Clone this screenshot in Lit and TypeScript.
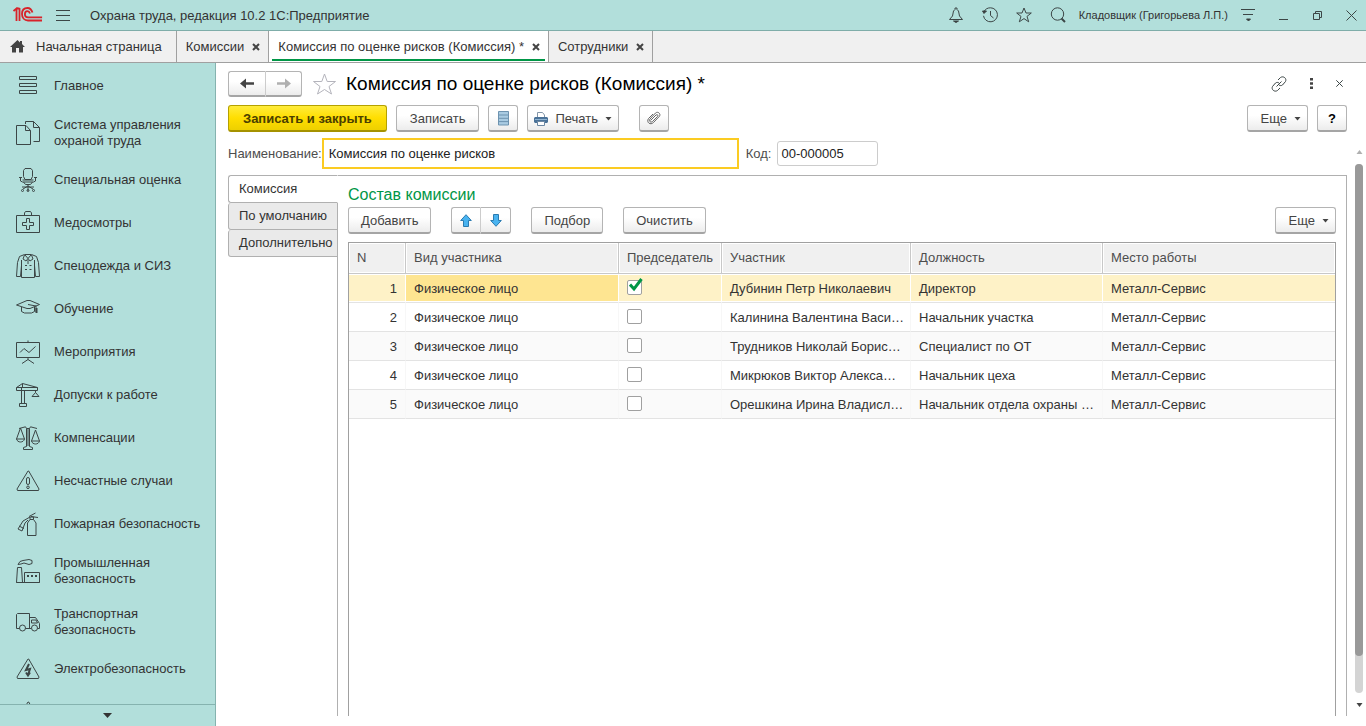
import { LitElement, html, svg, css } from "lit";
import { customElement, property, state } from "lit/decorators.js";
import { classMap } from "lit/directives/class-map.js";

const sectionIcons: Record<string, unknown> = {
  menu: svg`<path d="M3.500 2.500h17v3h-17zM3.500 9.500h17v3h-17zM3.500 16.500h17v3h-17z"/>`,
  docs: svg`<path d="M.5 4.500h9.500l4.500 5v14H.5zM9.500 4.500v5h5M9.500 3V.5h8l6 6v14h-6M17.500.5v6h6"/>`,
  chair: svg`<path d="M9 .5h6l1.500 2v6l-1.500 3H9l-1.500-3v-6zM3 9.500h3M18 9.500h3M4.500 9.500v3.500l2 1h11l2-1V9.500M6.500 12h11M7.500 14l2 2.500h5l2-2.500M12 16v7M12 18l-5 3M12 18l5 3M6 19h12"/><circle cx="6.500" cy="22.500" r="1"/><circle cx="12" cy="22.500" r="1"/><circle cx="17.500" cy="22.500" r="1"/>`,
  medkit: svg`<path d="M.5 4.500h23v17H.5zM8.500 4.500V2l1-1.500h5l1 1.500v2.500M10.500 7.500h3v4h4v3h-4v4h-3v-4h-4v-3h4z"/>`,
  coat: svg`<path d="M8.500.5h7l5 2 2 6 1 14h-4l-1-11M8.500.5l-5 2-2 6-1 14h4l1-11M5.500 11v12.500h13V11M8.500 1L7 5l3 2 2-2.500L14 7l3-2-1.500-4M9 1l3 3.500L15 1M12 6v4M5.500 6v6M18.500 6v6"/><path d="M9 11.500h2M13.500 11.500h2M9 15.500h2M13.500 15.500h2"/>`,
  cap: svg`<path d="M.5 8L11 3.500h3L23.500 7.500 14 11.500h-3zM5.500 10v4.500l3 1.500h7l3-1.500V10M12 7.500l8 1.500v6"/><path class="bold" d="M20.500 11v5"/>`,
  board: svg`<path d="M.5 2.500h23v15H.5zM12 .5v2M12 17.500v2M12 19.500l-6 4M12 19.500l6 4M4 12.500l4-4 5 4 6.500-6"/>`,
  crane: svg`<path d="M.5 4.500h21v3H.5zM.5 4.500L6.500.5l15 4M6.500.5v4M5.500 7.500v13M8.500 7.500v13M3.500 20.500h7v3h-7zM19.500 7.500v2M16 13.500l3.500-4 3.500 4zM5.500 4v3"/>`,
  scales: svg`<path d="M3 2.500L9.500.8l1 1.700h3l1-1.700L21 2.500M4.500 2l-4 11h8zM19.500 4l-4 11h8zM.5 13c1 4 7 4 8 0M15.500 15c1 4 7 4 8 0M10.500 2.500v18M13.500 2.500v18M10.500 20.500l-3 1v2h9v-2l-3-1M12 3v17"/>`,
  warning: svg`<path d="M12 2L1 20l.5 1.500h21L23 20 12.700 2z"/><rect x="10.500" y="8.500" width="3" height="7" rx="1.500"/><circle cx="12" cy="18.300" r="1.300"/>`,
  fire: svg`<path d="M11.500 23.500V11l2.500-3.500h3.500L20 11v12.500zM14 7.500V5h3.500v2.500M13 4.500L19.500 1M15 4.500l7 1M14 5L7 9l-5 8 4 2 3-8 3-3M3 14l5 2.500"/>`,
  factory: svg`<path d="M.5 23.500l1-15h4l1 15zM8.500 13.500h15v10h-15zM.5 23.500h23M2 5.500l2-3 3-1 6-1 3 1v3l-3 1-5-1.500-3 1z"/><path class="bold" d="M11 17h2M15 17h2M19 17h2"/>`,
  truck: svg`<path d="M3.500 18.500H.5v-14l1-1h12v15h-4M13.500 7.500h6l4 6v5h-2M15 18.500h-5M15.500 10h4.500l1.500 3h-6z"/><circle cx="6.500" cy="18" r="3"/><circle cx="18.500" cy="18" r="3"/>`,
  electric: svg`<path d="M12 2L1 20l.5 1.500h21L23 20 12.700 2z"/><path class="bold" d="M13 7l-3 6 4-1-2 6M10 15.500l2 3 2-3"/>`,
};

interface Section { icon: string; lines: string[]; }

const sections: Section[] = [
  { icon: "menu", lines: ["Главное"] },
  { icon: "docs", lines: ["Система управления", "охраной труда"] },
  { icon: "chair", lines: ["Специальная оценка"] },
  { icon: "medkit", lines: ["Медосмотры"] },
  { icon: "coat", lines: ["Спецодежда и СИЗ"] },
  { icon: "cap", lines: ["Обучение"] },
  { icon: "board", lines: ["Мероприятия"] },
  { icon: "crane", lines: ["Допуски к работе"] },
  { icon: "scales", lines: ["Компенсации"] },
  { icon: "warning", lines: ["Несчастные случаи"] },
  { icon: "fire", lines: ["Пожарная безопасность"] },
  { icon: "factory", lines: ["Промышленная", "безопасность"] },
  { icon: "truck", lines: ["Транспортная", "безопасность"] },
  { icon: "electric", lines: ["Электробезопасность"] },
  { icon: "warning", lines: [] },
];

const shared = css`
  * { box-sizing: border-box; }
  button, input { font: inherit; color: inherit; margin: 0; }
  button { padding: 0; border: 0; background: none; }
  svg { display: block; flex: none; fill: none; stroke: #3c4646; stroke-width: 1; }
`;

@customElement("app-header")
class AppHeader extends LitElement {
  static styles = [shared, css`
    :host { display: flex; align-items: center; height: 31px; padding: 0 9px 0 13px; background: #b2dfdb; border-bottom: 1px solid #7fada9; color: #333; }
    .menu { margin-left: 13px; }
    .title { margin: 0 auto 0 19px; padding-top: 2px; font-size: 13px; font-weight: normal; }
    .tools { display: flex; align-items: center; gap: 18px; }
    .user { font-size: 11px; margin: 0 13px; }
    .window { display: flex; align-items: center; gap: 23px; margin-left: 22px; }
    .solid { fill: #333; }
    .logo { stroke: #d8232a; stroke-width: 1.800; }
  `];
  render() {
    return html`
      <svg class="logo" width="30" height="16" viewBox="0 0 30 16"><path d="M.5 4L3.500 1.500V14M6.500 1v13M3.500 1.500h3M19.500 5.500C18.500 2.500 17 1 14.500 1 11 1 9 3.500 9 7c0 4 2.500 6.500 6 6.500h14M17 6.500C16.500 5 15.800 4.200 14.500 4.200c-1.800 0-2.600 1.300-2.600 3 0 2 1.300 3.200 3.200 3.200h14"/></svg>
      <button class="menu" aria-label="Меню"><svg width="15" height="13" viewBox="0 0 15 13"><path d="M0 1.500h14M0 6.500h14M0 11.500h14"/></svg></button>
      <h1 class="title">Охрана труда, редакция 10.2 1С:Предприятие</h1>
      <div class="tools">
        <button aria-label="Уведомления"><svg width="16" height="16" viewBox="0 0 16 16"><path d="M1.500 12.500h13l-3-3.500-1-5L9 2.500V1H7v1.500L5.500 4l-1 5z"/><path class="solid" d="M5.500 14h5L8 15.500z"/></svg></button>
        <button aria-label="История"><svg width="16" height="16" viewBox="0 0 16 16"><path d="M2 4.500C3.500 2 5.500.8 8.500.8a7 7 0 1 1-7 8M8.500 4v4.500l3 2.500"/><path class="solid" d="M.5 4h4L2 6.500z"/></svg></button>
        <button aria-label="Избранное"><svg width="16" height="16" viewBox="0 0 16 16"><path d="M8 1l2 5h5.300L11 9.400l1.700 5.400L8 11.600l-4.700 3.200L5 9.400.7 6H6z"/></svg></button>
        <button aria-label="Поиск"><svg width="16" height="16" viewBox="0 0 16 16"><circle cx="7.500" cy="7" r="6.200"/><path stroke-width="2" d="M11.500 11.500l3.500 3.500"/></svg></button>
      </div>
      <span class="user">Кладовщик (Григорьева Л.П.)</span>
      <button aria-label="Настройки"><svg width="15" height="14" viewBox="0 0 15 14"><path d="M0 1.500h14M2 6.500h10"/><path class="solid" d="M5.500 11h4l-2 2z"/></svg></button>
      <div class="window">
        <button aria-label="Свернуть"><svg width="11" height="11" viewBox="0 0 11 11"><path d="M1 9.500h9"/></svg></button>
        <button aria-label="Развернуть"><svg width="11" height="11" viewBox="0 0 11 11"><path d="M1.500 3.500h6v6h-6zM3.500 3.500v-2h6v6h-2"/></svg></button>
        <button aria-label="Закрыть"><svg width="11" height="11" viewBox="0 0 11 11"><path d="M.5.5l10 10M10.500.5l-10 10"/></svg></button>
      </div>`;
  }
}

@customElement("app-tabs")
class AppTabs extends LitElement {
  static styles = [shared, css`
    :host { display: flex; height: 32px; background: #f0f0f0; border-bottom: 1px solid #a0a0a0; font-size: 13px; color: #333; }
    .tab { display: flex; align-items: center; gap: 8px; padding: 0 8px 0 9px; border-right: 1px solid #a0a0a0; }
    .home { gap: 11px; padding: 0 14px 0 10px; }
    .active { background: linear-gradient(#009646, #009646) 50% calc(100% - 1px) / calc(100% - 6px) 2px no-repeat #fff; }
    .solid { fill: #444; stroke: none; }
    .cross { stroke: #444; stroke-width: 2; }
  `];
  render() {
    const tabs = ["Комиссии", "Комиссия по оценке рисков (Комиссия) *", "Сотрудники"];
    return html`
      <button class="tab home"><svg width="15" height="13" viewBox="0 0 15 13"><path class="solid" d="M7.500 0L0 7h2v5.500h4V8h3v4.500h4V7h2l-3-3V1h-2v1.500z"/></svg>Начальная страница</button>
      ${tabs.map((name, i) => html`<div class=${classMap({ tab: true, active: i === 1 })}><button>${name}</button>
        <button aria-label="Закрыть"><svg class="cross" width="8" height="8" viewBox="0 0 8 8"><path d="M1 1l6 6M7 1L1 7"/></svg></button></div>`)}`;
  }
}

@customElement("app-sections")
class AppSections extends LitElement {
  static styles = [shared, css`
    :host { display: flex; flex-direction: column; flex: none; width: 216px; background: #b2dfdb; border-right: 1px solid #85b3af; color: #333; font-size: 13px; line-height: 16px; }
    .list { flex: 1; min-height: 0; overflow: hidden; margin: 0; padding: 1px 0 0; list-style: none; }
    .link { display: flex; align-items: center; gap: 14px; min-height: 43px; padding: 10px 8px 9px 16px; color: inherit; text-decoration: none; }
    .line { display: block; }
    .bold { stroke-width: 2; }
    .more { display: flex; align-items: center; justify-content: center; height: 22px; border-top: 1px solid #85b3af; }
    .solid { fill: #333; stroke: none; }
  `];
  render() {
    return html`
      <ul class="list">${sections.map((s) => html`<li><a class="link" href="#">
        <svg width="24" height="24" viewBox="0 0 24 24">${sectionIcons[s.icon]}</svg>
        <span>${s.lines.map((l) => html`<span class="line">${l}</span>`)}</span></a></li>`)}</ul>
      <button class="more" aria-label="Еще разделы"><svg width="9" height="5" viewBox="0 0 9 5"><path class="solid" d="M0 0h9L4.500 5z"/></svg></button>`;
  }
}

interface Member { name: string; post: string; chair: boolean; }

@customElement("members-table")
class MembersTable extends LitElement {
  static styles = [shared, css`
    :host { display: block; flex: 1; min-height: 0; overflow: hidden; border: 1px solid #a0a0a0; border-bottom: 0; }
    .grid { width: 100%; table-layout: fixed; border-collapse: separate; border-spacing: 0; }
    .n { width: 57px; } .kind { width: 213px; } .lead { width: 103px; } .who { width: 189px; } .post { width: 192px; }
    th, td { padding: 0 4px 0 8px; text-align: left; font-weight: normal; white-space: nowrap; overflow: hidden; }
    th { height: 31px; background: #f0f0f0; color: #4d4d4d; border-right: 1px solid #c8c8c8; border-bottom: 1px solid #c8c8c8; box-shadow: inset 0 0 0 1px #fff; }
    td { height: 29px; padding-top: 1px; color: #333; border-right: 1px solid #f7f7f7; border-bottom: 1px solid #e3e3e3; }
    th:last-child, td:last-child { border-right: 0; }
    td.num { text-align: right; padding-right: 8px; }
    tr:nth-child(odd) td { background: #fafafa; }
    tr.current td { background: #fef2c7; border-right-color: #fff; box-shadow: inset 0 1px #fff, inset 0 -1px #fff; }
    tr.current td.cell { background: #fee591; }
    .check { position: relative; display: block; width: 15px; height: 15px; }
    .box { appearance: none; display: block; width: 15px; height: 15px; background: #fff; border: 1px solid #a0a0a0; border-radius: 2px; }
    .mark { position: absolute; left: 2px; top: -2px; stroke: #009646; stroke-width: 3; pointer-events: none; }
    td.flag { overflow: visible; padding-top: 0; padding-bottom: 2px; }
  `];
  @property({ attribute: false }) members: Member[] = [];
  render() {
    return html`<table class="grid">
      <colgroup><col class="n"><col class="kind"><col class="lead"><col class="who"><col class="post"><col></colgroup>
      <thead><tr><th>N</th><th>Вид участника</th><th>Председатель</th><th>Участник</th><th>Должность</th><th>Место работы</th></tr></thead>
      <tbody>${this.members.map((m, i) => html`<tr class=${classMap({ current: i === 0 })}>
        <td class="num">${i + 1}</td><td class="cell">Физическое лицо</td>
        <td class="flag"><label class="check"><input class="box" type="checkbox" aria-label="Председатель" .checked=${m.chair}>
          ${m.chair ? html`<svg class="mark" width="14" height="14" viewBox="0 0 14 14"><path d="M1 6.500l4 4.500L12.500 1"/></svg>` : ""}</label></td>
        <td>${m.name}</td><td>${m.post}</td><td>Металл-Сервис</td></tr>`)}</tbody>
    </table>`;
  }
}

@customElement("app-root")
class AppRoot extends LitElement {
  static styles = [shared, css`
    :host { display: flex; flex-direction: column; height: 100vh; overflow: hidden; background: #fff; color: #333; font: 13px/16px "Liberation Sans", Arial, sans-serif; }
    .work { display: flex; flex: 1; min-height: 0; }
    .main { display: flex; flex-direction: column; flex: 1; min-width: 0; padding: 8px 0 10px 12px; }
    .head { display: flex; align-items: center; height: 25px; margin: 0 21px 9px 0; }
    .btn { display: flex; align-items: center; justify-content: center; height: 27px; padding: 2px 13px 0; color: #444; background: linear-gradient(#fff 40%, #ececec); border: 1px solid #b4b4b4; border-bottom: 2px solid #a5a5a5; border-radius: 3px; white-space: nowrap; }
    .pair { display: flex; }
    .pair .btn { padding: 0; width: 30px; }
    .pair .btn:first-child { border-radius: 3px 0 0 3px; border-right-color: #ccc; }
    .pair .btn:last-child { border-left: 0; border-radius: 0 3px 3px 0; }
    .nav .btn { height: 26px; width: 36px; }
    .nav .btn:first-child { width: 38px; }
    .btn.primary { padding: 2px 14px 0; color: #4a4000; font-weight: bold; background: linear-gradient(#ffec3c, #ffde00 50%, #edd000); border-color: #b5a100; border-bottom-color: #a59200; }
    .btn.icon { width: 30px; padding: 0; }
    .btn.drop { gap: 7px; padding: 2px 6px 0 13px; }
    .btn.print { gap: 7px; padding: 2px 6px 0; }
    .btn.help { color: #000; font-weight: bold; width: 30px; padding: 2px 0 0; }
    .star { margin: 0 9px 0 10px; }
    .title { flex: 1; margin: 0; font-size: 19px; line-height: 24px; font-weight: normal; color: #000; }
    .marks { display: flex; align-items: center; gap: 23px; margin-right: 2px; }
    .bar { display: flex; align-items: center; gap: 9px; margin-right: 19px; }
    .apart { margin-left: 11px; }
    .push { margin-left: auto; }
    .area { display: flex; flex: 1; min-height: 0; margin-top: 6px; }
    .form { display: flex; flex-direction: column; flex: 1; min-width: 0; }
    .fields { display: flex; align-items: center; color: #4d4d4d; margin-bottom: 6px; }
    .name { flex: 0 1 417px; min-width: 0; height: 31px; margin: 0 7px 0 0; padding: 0 5px; border: 2px solid #fbcb22; outline: 0; color: #222; background: #fff; }
    .code { width: 101px; height: 25px; margin-left: 6px; padding: 0 3px; border: 1px solid #ccc; border-radius: 3px; color: #222; background: #fff; }
    .pages { display: flex; flex: 1; min-height: 0; }
    .side { display: flex; flex-direction: column; flex: none; width: 110px; margin-right: -1px; }
    .page { height: 27px; padding: 0 0 0 10px; text-align: left; background: #eaeaea; border: 1px solid #b0b0b0; border-top: 0; border-radius: 3px 0 0 3px; white-space: nowrap; }
    .page.open { height: 28px; background: #fff; border-top: 1px solid #b0b0b0; border-right-color: #fff; z-index: 1; }
    .panel { display: flex; flex-direction: column; flex: 1; min-width: 0; padding: 9px 10px 0; border: 1px solid #b0b0b0; border-bottom: 0; }
    .group { margin: 0 0 3px; font-size: 16px; line-height: 19px; font-weight: normal; color: #009646; }
    .commands { display: flex; gap: 20px; margin-bottom: 8px; }
    .commands .plain { padding: 2px 12px 0; }
    .scroll { display: flex; flex-direction: column; align-items: center; flex: none; width: 19px; padding: 12px 0 9px 5px; gap: 10px; }
    .track { flex: 1; width: 8px; background: #d4d4d4; border-radius: 4px; }
    .thumb { height: 93%; background: #999; border-radius: 4px; }
    .solid { fill: #444; stroke: none; }
    .pale { fill: #b0b0b0; stroke: none; }
    .blue { fill: #49b3f0; stroke: #2b7bb0; }
  `];
  @state() private members: Member[] = [
    { name: "Дубинин Петр Николаевич", post: "Директор", chair: true },
    { name: "Калинина Валентина Васи…", post: "Начальник участка", chair: false },
    { name: "Трудников Николай Борис…", post: "Специалист по ОТ", chair: false },
    { name: "Микрюков Виктор Алекса…", post: "Начальник цеха", chair: false },
    { name: "Орешкина Ирина Владисл…", post: "Начальник отдела охраны …", chair: false },
  ];
  render() {
    const caret = html`<svg width="7" height="4" viewBox="0 0 7 4"><path class="solid" d="M.5 0h6l-3 3.500z"/></svg>`;
    return html`
      <app-header></app-header>
      <app-tabs></app-tabs>
      <div class="work">
        <app-sections></app-sections>
        <main class="main">
          <div class="head">
            <div class="pair nav">
              <button class="btn" aria-label="Назад"><svg width="14" height="11" viewBox="0 0 14 11"><path class="solid" d="M0 5.500L6 .5v3.700h8v2.600H6v3.700z"/></svg></button>
              <button class="btn" aria-label="Вперед"><svg width="14" height="11" viewBox="0 0 14 11"><path class="pale" d="M14 5.500L8 .5v3.700H0v2.600h8v3.700z"/></svg></button>
            </div>
            <button class="star" aria-label="В избранное"><svg width="25" height="24" viewBox="0 0 25 24"><path stroke="#b4b4bc" d="M12.500 2l2.700 7.500h8.300l-6.500 5 2.500 7.500-7-4.500-7 4.500L8 14.500l-6.500-5h8.300z"/></svg></button>
            <h2 class="title">Комиссия по оценке рисков (Комиссия) *</h2>
            <div class="marks">
              <button aria-label="Ссылка"><svg width="16" height="16" viewBox="0 0 16 16"><path d="M7 4l2.500-2.500c3-2 6.500 1 5 4L11.500 9c-1 .8-2.500.8-3.500 0M9 12l-2.500 2.500c-3 2-6.500-1-5-4L4.500 7C5.500 6.200 7 6.200 8 7M5.500 10.500l5-5"/></svg></button>
              <button aria-label="Действия"><svg width="3" height="11" viewBox="0 0 3 11"><path class="solid" d="M0 0h3v2.500H0zM0 4.200h3v2.600H0zM0 8.500h3V11H0z"/></svg></button>
              <button aria-label="Закрыть"><svg width="7" height="7" viewBox="0 0 7 7"><path d="M.3.300l6.400 6.400M6.700.300L.3 6.700"/></svg></button>
            </div>
          </div>
          <div class="bar">
            <button class="btn primary">Записать и закрыть</button>
            <button class="btn">Записать</button>
            <button class="btn icon" aria-label="Реестр"><svg width="11" height="15" viewBox="0 0 11 15"><path fill="#a9cbe2" stroke="#6d93b0" d="M.5.500h10v13.500H.5zM.5 4h10M.5 7.300h10M.5 10.600h10"/></svg></button>
            <button class="btn print"><svg width="14" height="14" viewBox="0 0 14 14"><path fill="#fff" stroke="#8295a8" d="M3.500 5V.5h5l2 2.500v2"/><path fill="#4a7298" stroke="none" d="M1 5h12l1 1v4l-1 1H1l-1-1V6z"/><path stroke="#8fb4d2" d="M1 7.500h12"/><path fill="#fff" stroke="#6d88a3" d="M3.500 9.500h7v4h-7z"/></svg>Печать ${caret}</button>
            <button class="btn icon apart" aria-label="Файлы"><svg width="14" height="14" viewBox="0 0 14 14"><path stroke="#666" d="M3.500 9.500l5.500-5.500c1.500-1 2.500.3 1.500 1.500L5.500 10.500c-2 1.500-4-.5-2.500-2.500L8.500 2c2.500-2 5.500.8 4 3.200L6.500 11.500c-3 3-7.500 0-5-4L6 3"/></svg></button>
            <button class="btn drop push">Еще ${caret}</button>
            <button class="btn help">?</button>
          </div>
          <div class="area">
            <div class="form">
              <div class="fields">
                <label for="name">Наименование:</label><input class="name" id="name" type="text" value="Комиссия по оценке рисков">
                <label for="code">Код:</label><input class="code" id="code" type="text" value="00-000005">
              </div>
              <div class="pages">
                <div class="side">
                  <button class="page open">Комиссия</button>
                  <button class="page">По умолчанию</button>
                  <button class="page">Дополнительно</button>
                </div>
                <section class="panel">
                  <h3 class="group">Состав комиссии</h3>
                  <div class="commands">
                    <button class="btn plain">Добавить</button>
                    <div class="pair">
                      <button class="btn" aria-label="Вверх"><svg width="12" height="13" viewBox="0 0 12 13"><path class="blue" d="M6 .7l5.300 5.800H8.500v6h-5v-6H.7z"/></svg></button>
                      <button class="btn" aria-label="Вниз"><svg width="12" height="13" viewBox="0 0 12 13"><path class="blue" d="M6 12.300L.7 6.500h2.800v-6h5v6h2.800z"/></svg></button>
                    </div>
                    <button class="btn plain">Подбор</button>
                    <button class="btn plain">Очистить</button>
                    <button class="btn drop push">Еще ${caret}</button>
                  </div>
                  <members-table .members=${this.members}></members-table>
                </section>
              </div>
            </div>
            <div class="scroll" aria-hidden="true">
              <svg width="7" height="4" viewBox="0 0 7 4"><path class="pale" d="M.5 4h6l-3-4z"/></svg>
              <div class="track"><div class="thumb"></div></div>
              <svg width="7" height="4" viewBox="0 0 7 4"><path class="solid" d="M.5 0h6l-3 4z"/></svg>
            </div>
          </div>
        </main>
      </div>`;
  }
}
